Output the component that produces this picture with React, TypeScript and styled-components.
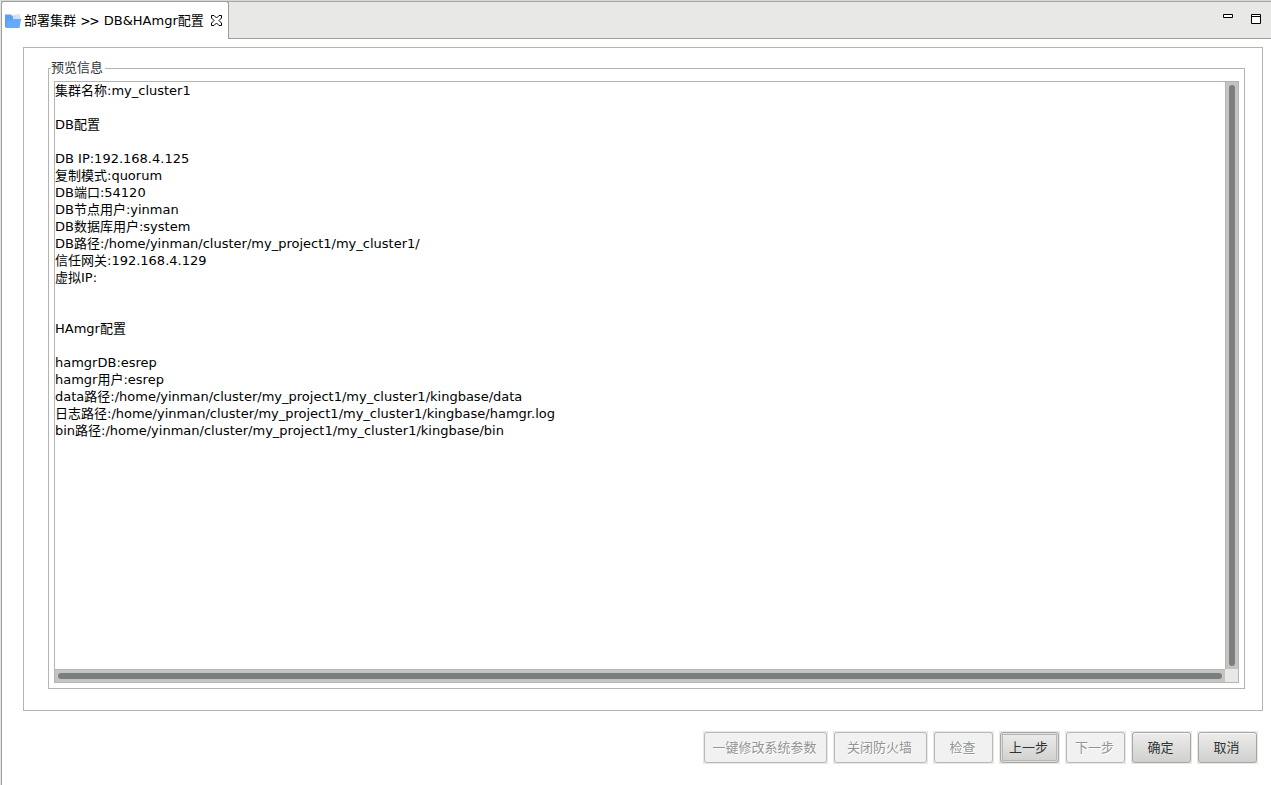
import React from "react";
import styled, { createGlobalStyle, css } from "styled-components";

const GlobalStyle = createGlobalStyle`
  *, *::before, *::after { box-sizing: border-box; }
  body {
    margin: 0;
    background: #ffffff;
    color: #000000;
    font: 13px/17px "DejaVu Sans", "Noto Sans CJK SC", sans-serif;
  }
`;

const Part = styled.main`
  display: flex;
  flex-direction: column;
  min-height: 100vh;
  border-left: 1px solid #e4e4e2;
`;

const Header = styled.header`
  display: flex;
  justify-content: space-between;
  height: 39px;
  background: linear-gradient(#9fa09d, #9fa09d) bottom / 100% 1px no-repeat, #e8e8e6;
  border-top: 1px solid #d6d6d4;
  box-shadow: inset 0 1px #a8a9a6;
`;

const Tab = styled.div`
  display: flex;
  align-items: center;
  height: 38px;
  padding: 0 6px 0 3px;
  background: #ffffff;
  border: 1px solid #9fa09d;
  border-bottom: 0;
  border-radius: 3px 3px 0 0;
`;

const TabTitle = styled.h1`
  display: flex;
  gap: 5px;
  margin: 0 7px 0 3px;
  font-size: 13px;
  font-weight: 400;
  white-space: nowrap;
`;

const Separator = styled.span`
  font-family: "Noto Sans CJK SC", sans-serif;
  font-size: 16px;
`;

const IconButton = styled.button`
  display: flex;
  padding: 0;
  border: 0;
  background: none;
`;

const Tools = styled.div`
  display: flex;
  align-items: flex-start;
  gap: 18px;
  padding: 12px 10px 0 0;
`;

const Content = styled.div`
  display: flex;
  flex: 1;
  flex-direction: column;
  gap: 20px;
  padding: 8px 8px 21px 21px;
  border-left: 1px solid #9fa09d;
`;

const Frame = styled.section`
  flex: 1;
  padding: 11px 17px 21px 24px;
  border: 1px solid #b4b4b1;
`;

const Group = styled.fieldset`
  min-width: 0;
  margin: 0;
  padding: 3px 5px 5px;
  border: 1px solid #b4b4b1;
`;

const Legend = styled.legend`
  margin-left: -3px;
  padding: 0 2px 2px 0;
  color: #2e3436;
`;

const TextPane = styled.div`
  display: grid;
  grid-template: 1fr 13px / 1fr 13px;
  min-height: calc(100vh - 183px);
  background: #e8e8e6;
  border: 1px solid #b4b4b1;
`;

const PreviewText = styled.textarea`
  display: block;
  width: 100%;
  height: 100%;
  padding: 0;
  border: 0;
  outline: 0;
  resize: none;
  overflow: hidden;
  background: #ffffff;
  color: #000000;
  font: inherit;
  white-space: pre;
`;

const Track = styled.div<{ $vertical?: boolean }>`
  display: flex;
  padding: 3px;
  background: #c4c5c3;
  ${(p) =>
    p.$vertical
      ? css`
          border-left: 1px solid #b4b4b1;
        `
      : css`
          border-top: 1px solid #b4b4b1;
        `}
`;

const Thumb = styled.div`
  flex: 1;
  background: #7a7e7d;
  border-radius: 3px;
`;

const Actions = styled.footer`
  display: flex;
  justify-content: flex-end;
  gap: 5px;
  padding-right: 5px;
`;

const ActionButton = styled.button<{ $width: number }>`
  display: flex;
  min-width: ${(p) => p.$width}px;
  height: 33px;
  padding: 1px;
  border: 0;
  background: #e8e8e6;
  color: #2e3436;
  font: inherit;
  white-space: nowrap;

  &:disabled {
    color: #929595;
    text-shadow: 1px 1px #ffffff;
  }
`;

const Face = styled.span<{ $off?: boolean; $focused?: boolean }>`
  display: flex;
  flex: 1;
  align-items: center;
  justify-content: center;
  height: 31px;
  padding: 0 9px 0 7px;
  border: 1px solid ${(p) => (p.$off ? "#b9bab7" : "#a6a8a4")};
  border-radius: 3px;
  background: ${(p) => (p.$off ? "#f1f1f1" : "linear-gradient(#ececeb, #d0d1cf)")};
  box-shadow: ${(p) =>
    p.$off
      ? "none"
      : p.$focused
        ? "inset 0 0 0 1px #dededc, inset 0 0 0 2px #b6b7b4"
        : "inset 0 1px #fafafa"};
`;

const preview = `集群名称:my_cluster1

DB配置

DB IP:192.168.4.125
复制模式:quorum
DB端口:54120
DB节点用户:yinman
DB数据库用户:system
DB路径:/home/yinman/cluster/my_project1/my_cluster1/
信任网关:192.168.4.129
虚拟IP:


HAmgr配置

hamgrDB:esrep
hamgr用户:esrep
data路径:/home/yinman/cluster/my_project1/my_cluster1/kingbase/data
日志路径:/home/yinman/cluster/my_project1/my_cluster1/kingbase/hamgr.log
bin路径:/home/yinman/cluster/my_project1/my_cluster1/kingbase/bin`;

const actions = [
  { label: "一键修改系统参数", width: 125, off: true },
  { label: "关闭防火墙", width: 95, off: true },
  { label: "检查", width: 61, off: true },
  { label: "上一步", width: 61, focused: true },
  { label: "下一步", width: 61, off: true },
  { label: "确定", width: 61 },
  { label: "取消", width: 61 },
];

const FolderIcon = () => (
  <svg width="16" height="16" viewBox="0 0 16 16" aria-hidden="true">
    <path d="M7 2l8-1 1 7-8 1z" fill="#d3e6fb" />
    <path d="M0 1.500h6l1.500 2H12V14H0z" fill="#5a9ff2" />
    <path d="M8 3.500l7-1 .5 4.500H8z" fill="#cfe3fb" />
    <path d="M2.500 7.500l5-.5 1-1H16l-1.500 9H.5z" fill="#66aaff" />
  </svg>
);

const CloseIcon = () => (
  <svg width="11" height="11" viewBox="0 0 11 11" aria-hidden="true">
    <path
      d="M.5.5h2.500l2.500 2.500 2.500-2.500h2.500v2.500l-2.500 2.500 2.500 2.500v2.500h-2.500l-2.500-2.500-2.500 2.500h-2.500v-2.500l2.500-2.500-2.500-2.500z"
      fill="#fff"
      stroke="#000"
    />
  </svg>
);

export default function App() {
  return (
    <>
      <GlobalStyle />
      <Part>
        <Header>
          <Tab>
            <FolderIcon />
            <TabTitle>
              <span>部署集群</span>
              <Separator>&gt;&gt;</Separator>
              <span>DB&amp;HAmgr配置</span>
            </TabTitle>
            <IconButton type="button" aria-label="关闭">
              <CloseIcon />
            </IconButton>
          </Tab>
          <Tools>
            <IconButton type="button" aria-label="最小化">
              <svg width="10" height="12" viewBox="0 0 10 12" aria-hidden="true">
                <path d="M.5 1.500h9v3h-9z" fill="#fff" stroke="#000" />
              </svg>
            </IconButton>
            <IconButton type="button" aria-label="最大化">
              <svg width="10" height="12" viewBox="0 0 10 12" aria-hidden="true">
                <path d="M.5 1.500h9v9h-9zM.5 3.500h9" fill="#fff" stroke="#000" />
              </svg>
            </IconButton>
          </Tools>
        </Header>
        <Content>
          <Frame>
            <Group>
              <Legend>
                <label htmlFor="preview">预览信息</label>
              </Legend>
              <TextPane>
                <PreviewText id="preview" readOnly spellCheck={false} value={preview} />
                <Track $vertical>
                  <Thumb />
                </Track>
                <Track>
                  <Thumb />
                </Track>
              </TextPane>
            </Group>
          </Frame>
          <Actions>
            {actions.map((a) => (
              <ActionButton key={a.label} type="button" disabled={a.off} $width={a.width}>
                <Face $off={a.off} $focused={a.focused}>
                  {a.label}
                </Face>
              </ActionButton>
            ))}
          </Actions>
        </Content>
      </Part>
    </>
  );
}
